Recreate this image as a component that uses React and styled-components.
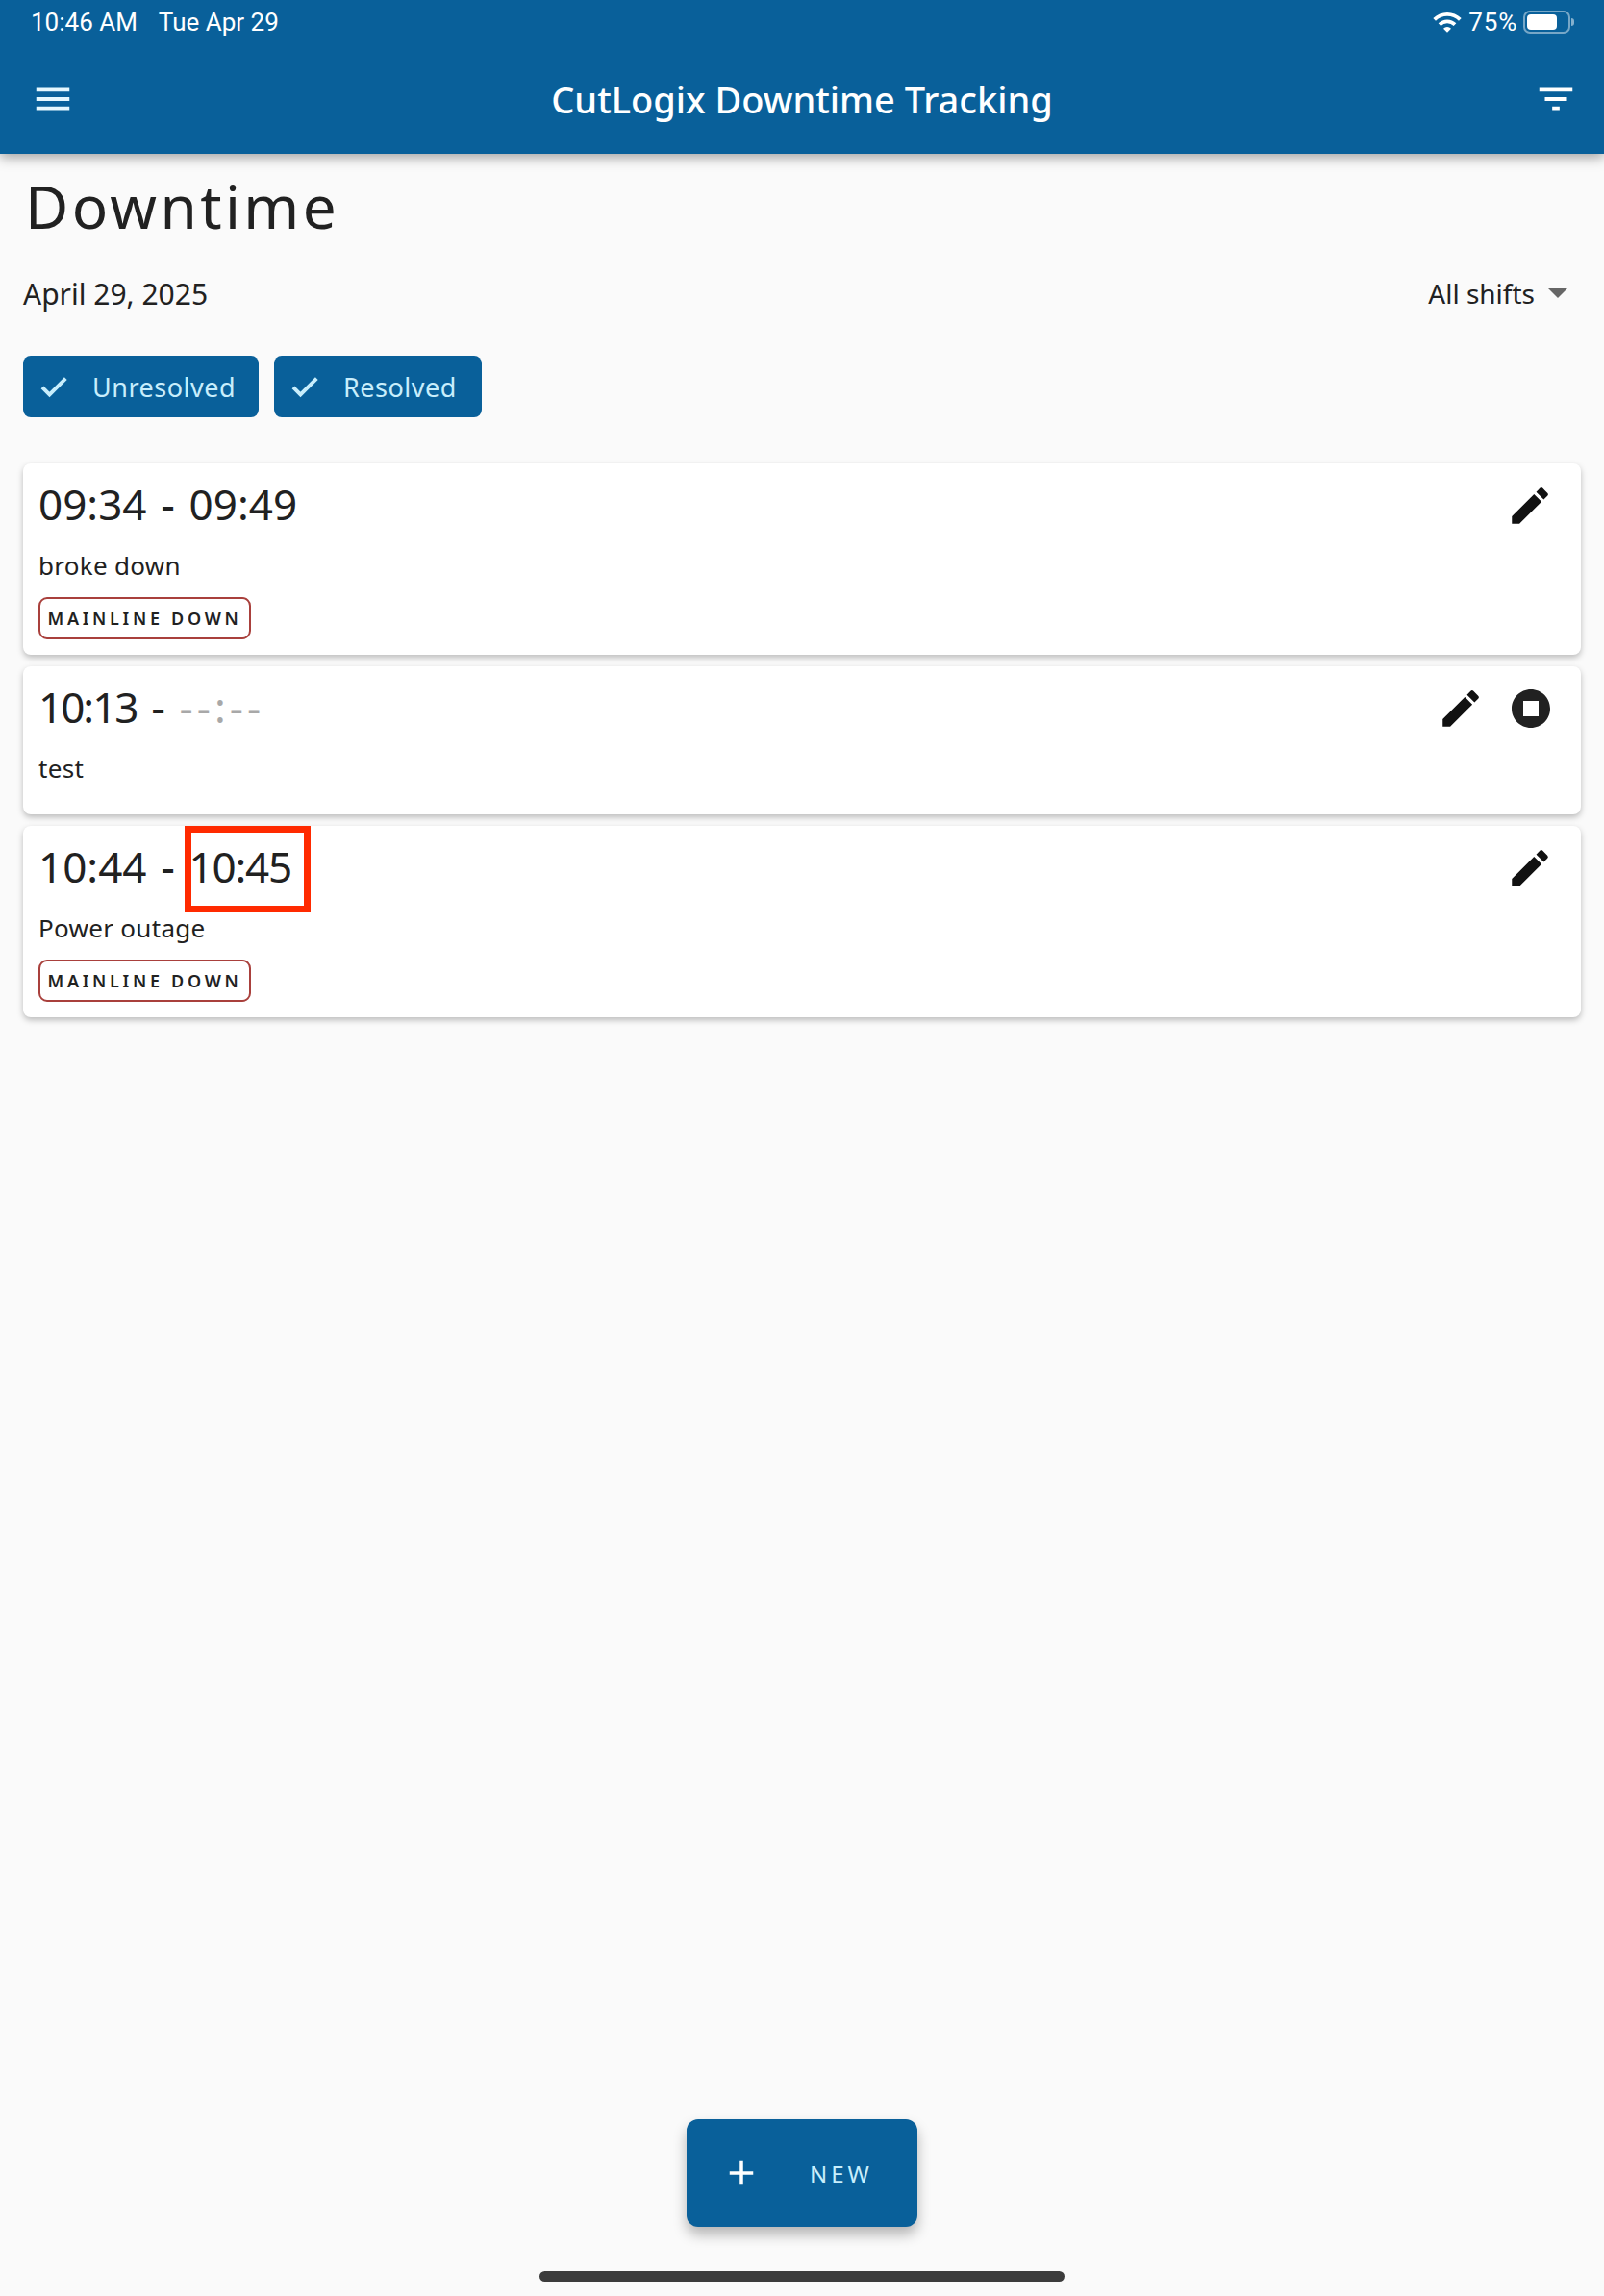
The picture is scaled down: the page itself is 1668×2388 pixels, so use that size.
import React from "react";
import styled, { createGlobalStyle } from "styled-components";
import { MdMenu, MdFilterList, MdEdit, MdStopCircle, MdAdd, MdWifi } from "react-icons/md";

const Global = createGlobalStyle`
  html, body { margin: 0; padding: 0; background: #fafafa; }
  * { box-sizing: border-box; }
`;
const FONT = `"Noto Sans", "Open Sans", sans-serif`;
const BLUE = "#09609a";

const Page = styled.div`
  position: relative;
  width: 1668px;
  height: 2388px;
  overflow: hidden;
  background: #fafafa;
  color: #212121;
  font-family: ${FONT};
`;
const Header = styled.header`
  height: 160px;
  background: ${BLUE};
  color: #fff;
  box-shadow: 0 4px 12px rgba(0, 0, 0, 0.35);
  display: flex;
  flex-direction: column;
`;
const StatusBar = styled.div`
  height: 46px;
  padding: 0 30px 0 32px;
  display: flex;
  align-items: center;
  justify-content: space-between;
  font-family: Roboto, sans-serif;
  font-size: 26px;
`;
const StatusGroup = styled.div`
  display: flex;
  align-items: center;
  gap: ${(p) => p.$gap}px;
`;
const Percent = styled.span`
  letter-spacing: 0.8px;
`;
const Battery = styled.div`
  position: relative;
  width: 49px;
  height: 24px;
  border: 2px solid rgba(255, 255, 255, 0.45);
  border-radius: 7px;
  padding: 2px;
  margin-right: 5px;
  &::before {
    content: "";
    display: block;
    width: 75%;
    height: 100%;
    background: #fff;
    border-radius: 4px;
  }
  &::after {
    content: "";
    position: absolute;
    right: -6px;
    top: 6px;
    width: 3px;
    height: 8px;
    border-radius: 0 3px 3px 0;
    background: rgba(255, 255, 255, 0.5);
  }
`;
const TitleBar = styled.div`
  flex: 1;
  padding: 0 27px 0 32px;
  display: flex;
  align-items: center;
  justify-content: space-between;
`;
const Title = styled.h1`
  margin: 0 5px 0 0;
  font-size: 38px;
  font-weight: 500;
  color: #fff;
`;
const Main = styled.main`
  padding: 0 24px;
`;
const PageTitle = styled.h2`
  margin: 12px 0 0 2px;
  font-size: 62px;
  line-height: 84px;
  font-weight: 400;
  letter-spacing: 3.4px;
`;
const DateRow = styled.div`
  margin-top: 29px;
  height: 40px;
  display: flex;
  align-items: center;
  justify-content: space-between;
  font-size: 30px;
`;
const ShiftSelect = styled.div`
  display: flex;
  align-items: center;
  gap: 14px;
  padding-right: 14px;
  font-size: 28px;
`;
const Caret = styled.span`
  width: 0;
  height: 0;
  border-left: 10px solid transparent;
  border-right: 10px solid transparent;
  border-top: 10px solid #666;
`;
const Chips = styled.div`
  margin-top: 45px;
  display: flex;
  gap: 16px;
`;
const Chip = styled.div`
  height: 64px;
  width: ${(p) => p.$w}px;
  padding-left: 14px;
  border-radius: 8px;
  background: ${BLUE};
  color: #c8eefc;
  display: flex;
  align-items: center;
  gap: 22px;
  font-size: 27px;
  letter-spacing: 0.5px;
`;
const Cards = styled.div`
  margin-top: 48px;
  display: flex;
  flex-direction: column;
  gap: 12px;
`;
const Card = styled.article`
  height: ${(p) => p.$h}px;
  padding: 12px 28px 0 16px;
  background: #fff;
  border-radius: 8px;
  box-shadow: 0 3px 6px rgba(0, 0, 0, 0.25);
  display: flex;
  justify-content: space-between;
`;
const CardBody = styled.div`
  display: flex;
  flex-direction: column;
  align-items: flex-start;
`;
const Time = styled.div`
  font-size: 44px;
  line-height: 60px;
  display: flex;
  gap: 15px;
`;
const Stamp = styled.span`
  position: relative;
  letter-spacing: ${(p) => p.$tight || 0}px;
`;
const Dash = styled.span`
  font-weight: 500;
`;
const Marker = styled.span`
  position: absolute;
  left: -5px;
  top: -12px;
  width: 131px;
  height: 90px;
  border: 7px solid #ff2a00;
`;
const Empty = styled.span`
  color: #a8a8a8;
  letter-spacing: 4px;
`;
const Note = styled.div`
  margin-top: 16px;
  font-size: 26px;
  line-height: 36px;
  letter-spacing: 0.3px;
`;
const Tag = styled.div`
  margin-top: 15px;
  height: 44px;
  width: 221px;
  border: 2px solid #a9403c;
  border-radius: 9px;
  display: flex;
  align-items: center;
  justify-content: center;
  font-size: 18px;
  font-weight: 600;
  letter-spacing: 3.7px;
  white-space: nowrap;
`;
const Actions = styled.div`
  display: flex;
  gap: 24px;
  padding-top: 8px;
  height: 56px;
  align-items: center;
  color: #111;
`;
const Fab = styled.button`
  position: absolute;
  left: 714px;
  top: 2204px;
  width: 240px;
  height: 112px;
  padding: 0 0 0 36px;
  border: 0;
  border-radius: 12px;
  background: ${BLUE};
  color: #c8eefc;
  font-family: ${FONT};
  font-size: 24px;
  letter-spacing: 4px;
  display: flex;
  align-items: center;
  gap: 50px;
  box-shadow: 0 8px 14px rgba(0, 0, 0, 0.28);
`;
const HomeBar = styled.div`
  position: absolute;
  left: 561px;
  top: 2362px;
  width: 546px;
  height: 11px;
  border-radius: 6px;
  background: #3c3c3c;
`;

const Icon = styled.span`
  display: inline-flex;
  color: ${(p) => p.$color || "inherit"};
`;

const Mainline = () => <Tag>MAINLINE DOWN</Tag>;
const Edit = () => <MdEdit size={50} />;
const Tick = () => (
  <svg width="36" height="36" viewBox="0 0 24 24" fill="none" stroke="currentColor" strokeWidth="2.6">
    <path d="M4 12.6 9 17.6 20.2 6.4" />
  </svg>
);

export default function App() {
  return (
    <Page>
      <Global />
      <Header>
        <StatusBar>
          <StatusGroup $gap={22}>
            <span>10:46 AM</span>
            <span>Tue Apr 29</span>
          </StatusGroup>
          <StatusGroup $gap={6}>
            <MdWifi size={32} />
            <Percent>75%</Percent>
            <Battery />
          </StatusGroup>
        </StatusBar>
        <TitleBar>
          <MdMenu size={46} color="#e6f8ff" />
          <Title>CutLogix Downtime Tracking</Title>
          <MdFilterList size={46} color="#fff" />
        </TitleBar>
      </Header>
      <Main>
        <PageTitle>Downtime</PageTitle>
        <DateRow>
          <span>April 29, 2025</span>
          <ShiftSelect>
            <span>All shifts</span>
            <Caret />
          </ShiftSelect>
        </DateRow>
        <Chips>
          <Chip $w={245}>
            <Tick />
            <span>Unresolved</span>
          </Chip>
          <Chip $w={216}>
            <Tick />
            <span>Resolved</span>
          </Chip>
        </Chips>
        <Cards>
          <Card $h={199}>
            <CardBody>
              <Time>
                <Stamp>09:34</Stamp>
                <Dash>-</Dash>
                <Stamp>09:49</Stamp>
              </Time>
              <Note>broke down</Note>
              <Mainline />
            </CardBody>
            <Actions>
              <Edit />
            </Actions>
          </Card>
          <Card $h={154}>
            <CardBody>
              <Time>
                <Stamp $tight={-2}>10:13</Stamp>
                <Dash>-</Dash>
                <Empty>--:--</Empty>
              </Time>
              <Note>test</Note>
            </CardBody>
            <Actions>
              <Edit />
              <Icon $color="#212121">
                <MdStopCircle size={48} />
              </Icon>
            </Actions>
          </Card>
          <Card $h={199}>
            <CardBody>
              <Time>
                <Stamp>10:44</Stamp>
                <Dash>-</Dash>
                <Stamp $tight={-1.2}>
                  10:45
                  <Marker />
                </Stamp>
              </Time>
              <Note>Power outage</Note>
              <Mainline />
            </CardBody>
            <Actions>
              <Edit />
            </Actions>
          </Card>
        </Cards>
      </Main>
      <Fab>
        <MdAdd size={42} color="#fff" />
        <span>NEW</span>
      </Fab>
      <HomeBar />
    </Page>
  );
}
